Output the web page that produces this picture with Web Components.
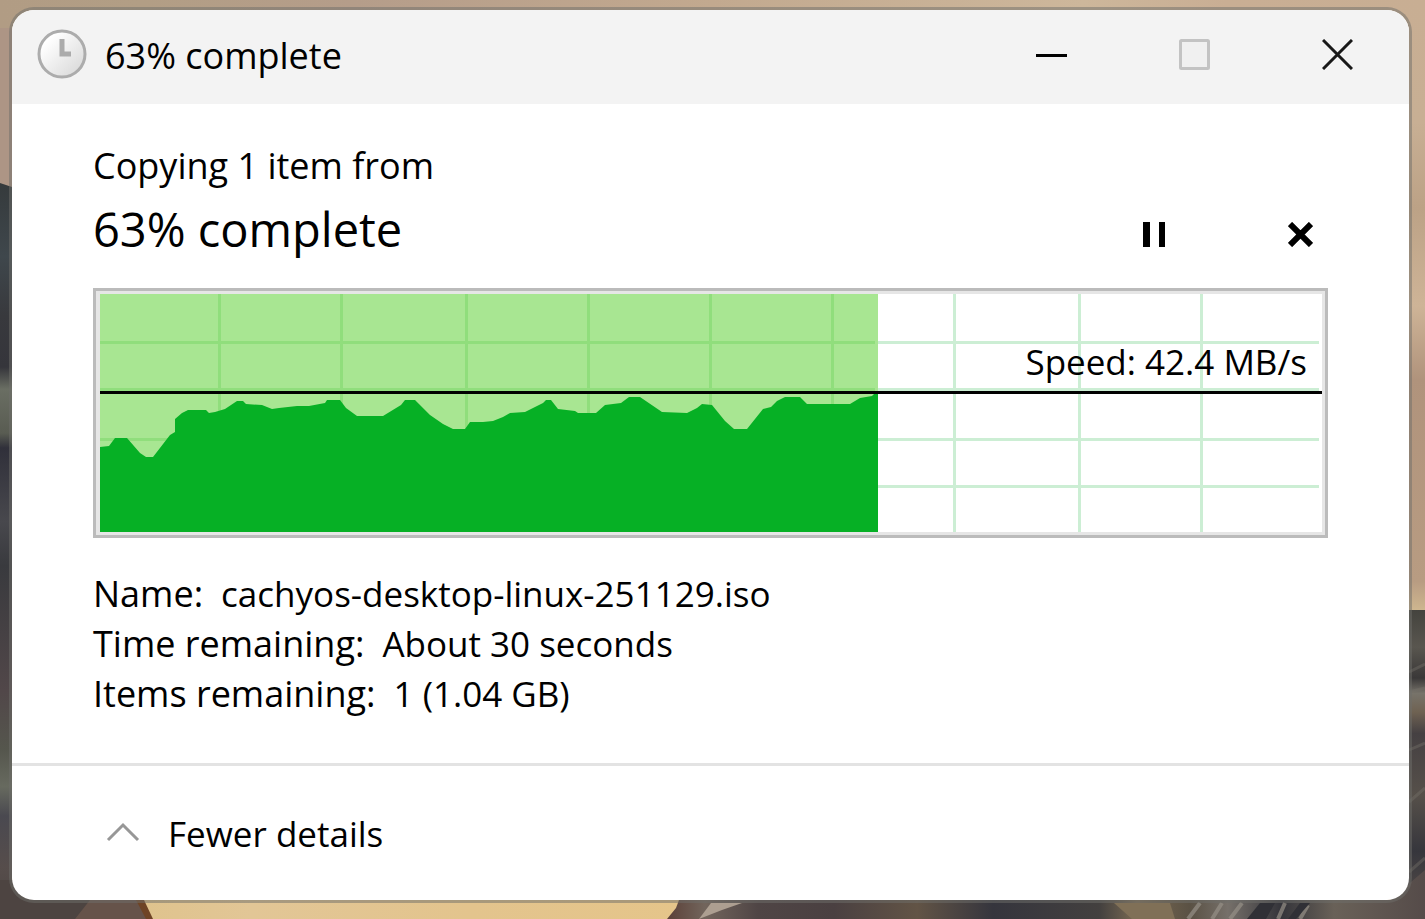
<!DOCTYPE html>
<html lang="en">
<head>
<meta charset="utf-8">
<meta name="viewport" content="width=device-width, initial-scale=1">
<title>63% complete</title>
<style>
  body { margin: 0; font-family: "Open Sans", "Noto Sans", sans-serif; font-size: 36px; line-height: 50px; color: #000; --value-size: 35px; }
</style>
</head>
<body>
<desktop-surface>
  <copy-window>
    <title-bar slot="title">63% complete</title-bar>
    <copy-header>
      <span slot="summary">Copying 1 item from</span>
      <span slot="progress">63% complete</span>
    </copy-header>
    <speed-chart>Speed: 42.4 MB/s</speed-chart>
    <copy-details>
      <detail-row label="Name:">cachyos-desktop-linux-251129.iso</detail-row>
      <detail-row label="Time remaining:">About 30 seconds</detail-row>
      <detail-row label="Items remaining:">1 (1.04 GB)</detail-row>
    </copy-details>
    <details-toggle slot="footer">Fewer details</details-toggle>
  </copy-window>
</desktop-surface>

<script>
const define = (name, html) => {
  const template = document.createElement('template');
  template.innerHTML = html;
  customElements.define(name, class extends HTMLElement {
    constructor() {
      super();
      this.attachShadow({ mode: 'open' }).append(template.content.cloneNode(true));
    }
    connectedCallback() {
      const label = this.shadowRoot.querySelector('[data-label]');
      if (label) label.textContent = this.getAttribute('label');
    }
  });
};

define('desktop-surface', `
  <style>
    :host { display: flex; flex-direction: column; box-sizing: border-box; min-height: 100vh; padding: 10px 16px 19px 12px; position: relative; isolation: isolate; background: #c8ae95; }
    svg { position: absolute; inset: 0; width: 100%; height: 100%; z-index: -1; }
    ::slotted(*) { flex: 1; }
  </style>
  <svg viewBox="0 0 1425 919" preserveAspectRatio="none" aria-hidden="true">
    <defs>
      <linearGradient id="sky" x2="1" y2="0">
        <stop offset="0" stop-color="#b19c84"/><stop offset=".1" stop-color="#b29e85"/><stop offset=".25" stop-color="#b59d8a"/>
        <stop offset=".5" stop-color="#c2a98f"/><stop offset=".76" stop-color="#cdb79b"/><stop offset=".86" stop-color="#c9ae94"/><stop offset="1" stop-color="#c8ae93"/>
      </linearGradient>
      <linearGradient id="haze" gradientUnits="userSpaceOnUse" x1="0" y1="0" x2="0" y2="612">
        <stop offset="0" stop-color="#c8ae93"/><stop offset=".2" stop-color="#c8af94"/><stop offset=".34" stop-color="#bca286"/><stop offset=".5" stop-color="#ceb497"/>
        <stop offset=".62" stop-color="#b0937c"/><stop offset=".95" stop-color="#b89c82"/><stop offset="1" stop-color="#d0b890"/>
      </linearGradient>
      <linearGradient id="cliff" gradientUnits="userSpaceOnUse" x1="0" y1="183" x2="0" y2="919">
        <stop offset="0" stop-color="#353a3c"/><stop offset=".1" stop-color="#3f474c"/><stop offset=".18" stop-color="#38393d"/><stop offset=".25" stop-color="#35353b"/>
        <stop offset=".28" stop-color="#6a6e63"/><stop offset=".34" stop-color="#595c52"/><stop offset=".36" stop-color="#30303a"/><stop offset=".46" stop-color="#48484d"/>
        <stop offset=".52" stop-color="#393a3e"/><stop offset=".69" stop-color="#514749"/><stop offset=".77" stop-color="#55564d"/><stop offset=".82" stop-color="#676a5f"/>
        <stop offset=".86" stop-color="#4a4950"/><stop offset=".93" stop-color="#564d4b"/><stop offset="1" stop-color="#4b4441"/>
      </linearGradient>
      <linearGradient id="slope" gradientUnits="userSpaceOnUse" x1="0" y1="610" x2="0" y2="919">
        <stop offset="0" stop-color="#44433e"/><stop offset=".12" stop-color="#59564f"/><stop offset=".22" stop-color="#3a3838"/><stop offset=".27" stop-color="#77736a"/>
        <stop offset=".33" stop-color="#6f6252"/><stop offset=".4" stop-color="#454042"/><stop offset=".6" stop-color="#56504a"/><stop offset=".78" stop-color="#36363c"/><stop offset="1" stop-color="#5c524c"/>
      </linearGradient>
      <linearGradient id="sand" x2="1" y2="0">
        <stop offset="0" stop-color="#dfc38d"/><stop offset=".2" stop-color="#e2c696"/><stop offset=".6" stop-color="#e3c48d"/><stop offset="1" stop-color="#e5c58a"/>
      </linearGradient>
      <linearGradient id="rocks" x2="1" y2="0">
        <stop offset="0" stop-color="#5b4038"/><stop offset=".05" stop-color="#72655c"/><stop offset=".12" stop-color="#4f4545"/><stop offset=".22" stop-color="#4a4041"/>
        <stop offset=".33" stop-color="#625446"/><stop offset=".43" stop-color="#35353d"/><stop offset=".57" stop-color="#43403f"/><stop offset=".62" stop-color="#7b6b53"/>
        <stop offset=".69" stop-color="#5a5144"/><stop offset=".74" stop-color="#76706a"/><stop offset=".81" stop-color="#34343a"/><stop offset=".88" stop-color="#696158"/><stop offset="1" stop-color="#554b49"/>
      </linearGradient>
    </defs>
    <rect width="1425" height="30" fill="url(#sky)"/>
    <rect y="28" width="20" height="160" fill="#ad9585"/>
    <rect x="1400" y="8" width="25" height="610" fill="url(#haze)"/>
    <path d="M0 183L12 187V919H0Z" fill="url(#cliff)"/>
    <path d="M1404 610H1425V919H1404Z" fill="url(#slope)"/>
    <path d="M1409 672L1425 664M1409 692L1425 688M1409 750L1425 743M1409 802L1425 788M1409 872L1425 858" stroke="#77736b" stroke-width="3" opacity=".4"/>
    <rect x="140" y="890" width="550" height="29" fill="url(#sand)"/>
    <path d="M0 880H30L36 900H143L151 919H0Z" fill="#4d4441"/>
    <path d="M90 900H143L151 919H75Z" fill="#66534a"/>
    <path d="M136 900H144L153 919H146Z" fill="#6e4426"/>
    <path d="M679 900H1390L1425 870V919H667L676 908Z" fill="url(#rocks)"/>
    <path d="M711 903H742L722 910L699 919Z" fill="#ad9f91"/>
    <path d="M1114 903H1170L1175 919H1132Z" fill="#807057"/>
    <path d="M1188 919L1200 903M1212 919L1222 903M1230 919L1242 903M1285 903L1278 919M1308 905L1300 919" stroke="#969087" stroke-width="4" opacity=".7"/>
    <path d="M1247 919L1260 903H1275L1266 919ZM1288 919L1300 903H1310L1296 919Z" fill="#303036"/>
  </svg>
  <slot></slot>`);

define('copy-window', `
  <style>
    :host { display: flex; flex-direction: column; border-radius: 22px; box-shadow: 0 0 0 3px rgba(110, 110, 106, .5); }
    section { flex: 1; display: flex; flex-direction: column; border-radius: 22px; overflow: hidden; background: #fff; }
    main { flex: 1; display: flex; flex-direction: column; gap: 28px; padding: 37px 81px 43px; }
    footer { display: flex; align-items: center; box-sizing: border-box; min-height: 137px; padding: 2px 81px 0; border-top: 3px solid #e3e3e3; }
  </style>
  <section>
    <slot name="title"></slot>
    <main><slot></slot></main>
    <footer><slot name="footer"></slot></footer>
  </section>`);

define('title-bar', `
  <style>
    :host { display: block; }
    header { display: flex; align-items: center; box-sizing: border-box; height: 94px; padding: 0 0 6px 25px; background: #f3f3f3; }
    h1 { flex: 1; margin: 4px 0 0 18px; font: inherit; white-space: nowrap; }
    button { display: grid; place-items: center; width: 143px; height: 88px; padding: 0; border: 0; background: none; }
    svg { display: block; }
  </style>
  <header>
    <svg width="50" height="50" viewBox="0 0 50 50" aria-hidden="true">
      <defs><linearGradient id="face" x1="0" y1="0" x2="1" y2="1"><stop offset=".2" stop-color="#fff"/><stop offset="1" stop-color="#d4d4d4"/></linearGradient></defs>
      <circle cx="25" cy="25" r="23" fill="url(#face)" stroke="#acacac" stroke-width="3"/>
      <path d="M25 10V25H34" fill="none" stroke="#ababab" stroke-width="5"/>
    </svg>
    <h1><slot></slot></h1>
    <button type="button" aria-label="Minimize"><svg width="31" height="31" viewBox="0 0 31 31"><path d="M0 16.5H31" stroke="#000" stroke-width="3"/></svg></button>
    <button type="button" aria-label="Maximize" disabled><svg width="31" height="31" viewBox="0 0 31 31"><rect x="1.5" y="1.5" width="28" height="28" rx="1" fill="#f0f0f0" stroke="#c3c3c3" stroke-width="3"/></svg></button>
    <button type="button" aria-label="Close"><svg width="31" height="31" viewBox="0 0 31 31"><path d="M1 1L30 30M30 1L1 30" stroke="#181818" stroke-width="3"/></svg></button>
  </header>`);

define('copy-header', `
  <style>
    :host { display: flex; flex-direction: column; gap: 7px; }
    p, h2 { margin: 0; font-weight: 400; }
    div { display: flex; align-items: flex-end; gap: 90px; }
    h2 { flex: 1; font-size: 47px; line-height: 62px; }
    button { display: grid; place-items: center; width: 56px; height: 51px; padding: 0; border: 0; background: none; }
    svg { display: block; }
  </style>
  <p><slot name="summary"></slot></p>
  <div>
    <h2><slot name="progress"></slot></h2>
    <button type="button" aria-label="Pause"><svg width="22" height="25" viewBox="0 0 22 25"><path d="M0 0H7V25H0ZM16 0H22V25H16Z"/></svg></button>
    <button type="button" aria-label="Cancel"><svg width="25" height="25" viewBox="0 0 25 25"><path d="M2 2L23 23M23 2L2 23" stroke="#000" stroke-width="6"/></svg></button>
  </div>`);

define('speed-chart', `
  <style>
    :host { display: grid; border: 3px solid #bbb; background: #fff; }
    svg, p { grid-area: 1 / 1; }
    svg { display: block; box-sizing: border-box; width: 100%; height: 244px; border: 3px solid #e6e6e6; border-left-width: 4px; }
    p { margin: 46px 18px 0 0; text-align: right; font-size: var(--value-size); }
  </style>
  <svg viewBox="0 0 1222 238" preserveAspectRatio="none" role="img" aria-label="Transfer speed over time">
    <rect width="778" height="238" fill="#a8e692"/>
    <path d="M854.5 0V238M979.5 0V238M1101.5 0V238M778 48.5H1219M778 95.5H1219M778 145.5H1219M778 192.5H1219" stroke="#cceed4" stroke-width="3"/>
    <path d="M119.5 0V238M241.5 0V238M366.5 0V238M488.5 0V238M610.5 0V238M732.5 0V238M0 48.5H775M0 95.5H775M0 145.5H775" stroke="#90de7c" stroke-width="3"/>
    <path fill="#06b025" d="M0 238V153L9 152L15 144H27L40 159L46 163H53L70 141L75 138V125L82 119L88 116H106L109 119L115 118L125 115L137 107H143L146 110L162 111L172 115L179 114L197 112L209 112L225 109L227 106H240L246 114L257 122H283L301 111L305 106H315L330 121L343 130L353 135H365L370 128H383L393 127L403 123L410 119L425 118L443 109L446 106H451L458 115L475 117L478 119H496L505 111L521 109L529 103H540L562 118L587 119L597 114L602 110L612 111L625 127L634 135H647L663 115L671 113L677 107L685 103H700L707 110H750L760 104L772 102L774 100H778V238Z"/>
    <path d="M0 98.5H1222" stroke="#000" stroke-width="3"/>
  </svg>
  <p><slot></slot></p>`);

define('copy-details', `
  <style>:host { display: flex; flex-direction: column; padding-top: 3px; }</style>
  <slot></slot>`);

define('detail-row', `
  <style>
    :host { display: flex; gap: 18px; }
    .value { font-size: var(--value-size); }
  </style>
  <span data-label></span><span class="value"><slot></slot></span>`);

define('details-toggle', `
  <style>
    :host { display: block; font-size: var(--value-size); }
    button { display: flex; align-items: center; gap: 28px; padding: 0 13px; border: 0; background: none; font: inherit; color: inherit; }
    svg { display: block; }
  </style>
  <button type="button" aria-expanded="true">
    <svg width="34" height="26" viewBox="0 0 34 26" aria-hidden="true"><path d="M2 19L17 4L32 19" fill="none" stroke="#979797" stroke-width="3"/></svg>
    <span><slot></slot></span>
  </button>`);
</script>
</body>
</html>
